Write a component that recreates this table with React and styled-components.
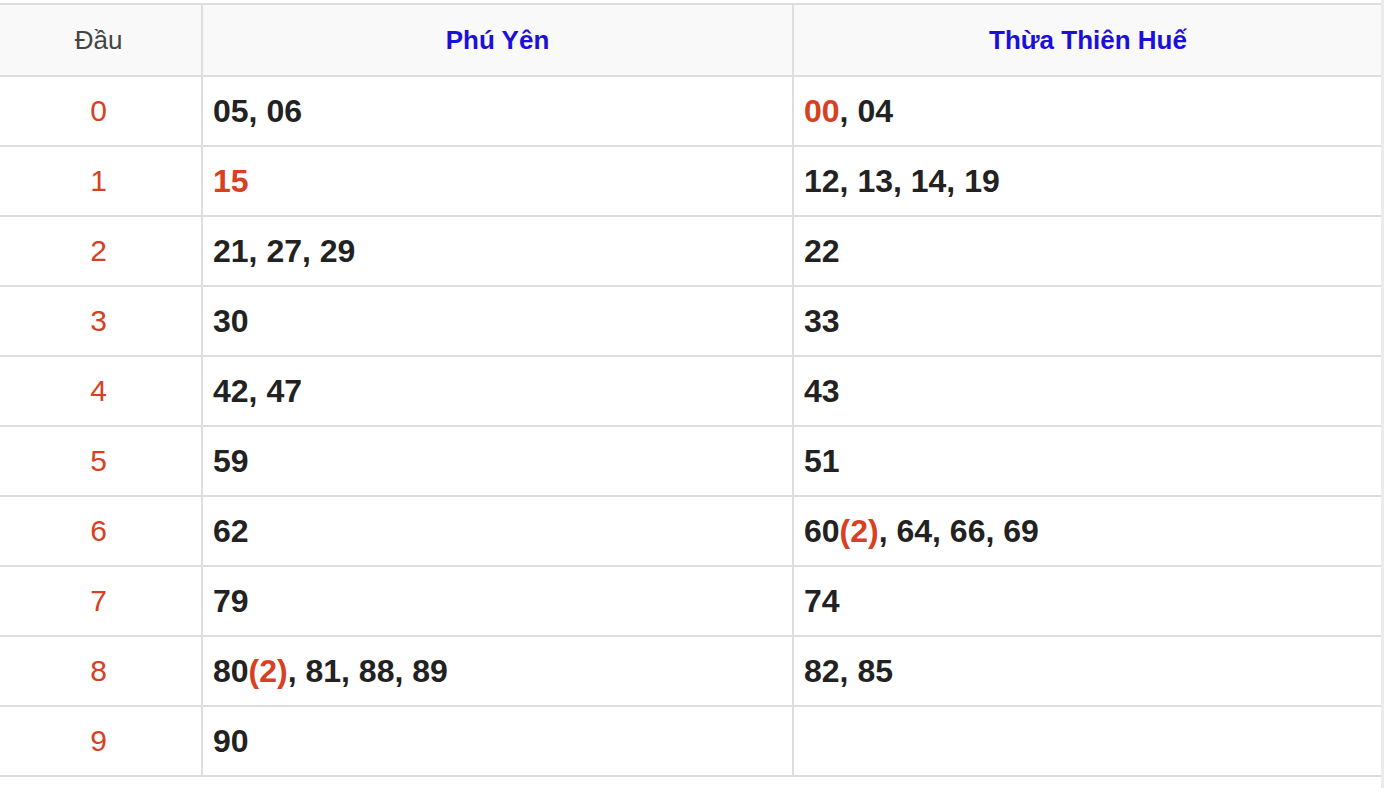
import React from "react";
import styled, { createGlobalStyle } from "styled-components";

const GlobalStyle = createGlobalStyle`
  html, body {
    margin: 0;
    padding: 0;
    background: #fff;
    font-family: "Liberation Sans", Arial, Helvetica, sans-serif;
  }
`;

const Page = styled.div`
  width: 1384px;
  height: 788px;
  border-right: 3px solid #ebebeb;
  overflow: hidden;
  padding-top: 3px;
  box-sizing: border-box;
`;

const Table = styled.table`
  margin-left: -4px;
  width: 1388px;
  table-layout: fixed;
  border-collapse: separate;
  border-spacing: 0;
  border-top: 2px solid #dedede;
`;

const HeadCell = styled.th`
  box-sizing: border-box;
  height: 72px;
  background: #f9f9f9;
  border-right: 2px solid #dedede;
  border-bottom: 2px solid #dedede;
  text-align: center;
  font-size: 26px;
  font-weight: ${(p) => (p.$plain ? 400 : 700)};
  color: ${(p) => (p.$plain ? "#444" : "#1c10d8")};
  padding: 0;
`;

const HeadCol = styled.col`
  width: ${(p) => p.$w}px;
`;

const DigitCell = styled.td`
  box-sizing: border-box;
  height: 70px;
  border-right: 2px solid #dedede;
  border-bottom: 2px solid #dedede;
  text-align: center;
  font-size: 30px;
  color: #d8401f;
  padding: 0;
`;

const NumCell = styled.td`
  box-sizing: border-box;
  height: 70px;
  border-right: 2px solid #dedede;
  border-bottom: 2px solid #dedede;
  padding: 0 0 0 10px;
  font-size: 32px;
  font-weight: 700;
  color: #222;
`;

const Hot = styled.span`
  color: #d8401f;
`;

// each entry: [number, count, highlighted]
const rows = [
  { head: 0, py: [["05"], ["06"]], hue: [["00", 1, true], ["04"]] },
  { head: 1, py: [["15", 1, true]], hue: [["12"], ["13"], ["14"], ["19"]] },
  { head: 2, py: [["21"], ["27"], ["29"]], hue: [["22"]] },
  { head: 3, py: [["30"]], hue: [["33"]] },
  { head: 4, py: [["42"], ["47"]], hue: [["43"]] },
  { head: 5, py: [["59"]], hue: [["51"]] },
  { head: 6, py: [["62"]], hue: [["60", 2], ["64"], ["66"], ["69"]] },
  { head: 7, py: [["79"]], hue: [["74"]] },
  { head: 8, py: [["80", 2], ["81"], ["88"], ["89"]], hue: [["82"], ["85"]] },
  { head: 9, py: [["90"]], hue: [] },
];

const Numbers = ({ list }) =>
  list.map(([n, count, hot], i) => (
    <React.Fragment key={n}>
      {i > 0 && ", "}
      {hot ? <Hot>{n}</Hot> : n}
      {count > 1 && <Hot>({count})</Hot>}
    </React.Fragment>
  ));

export default function App() {
  return (
    <>
      <GlobalStyle />
      <Page>
        <Table>
          <colgroup>
            <HeadCol $w={207} />
            <HeadCol $w={591} />
            <HeadCol $w={590} />
          </colgroup>
          <thead>
            <tr>
              <HeadCell $plain>Đầu</HeadCell>
              <HeadCell>Phú Yên</HeadCell>
              <HeadCell>Thừa Thiên Huế</HeadCell>
            </tr>
          </thead>
          <tbody>
            {rows.map((r) => (
              <tr key={r.head}>
                <DigitCell>{r.head}</DigitCell>
                <NumCell>
                  <Numbers list={r.py} />
                </NumCell>
                <NumCell>
                  <Numbers list={r.hue} />
                </NumCell>
              </tr>
            ))}
          </tbody>
        </Table>
      </Page>
    </>
  );
}
